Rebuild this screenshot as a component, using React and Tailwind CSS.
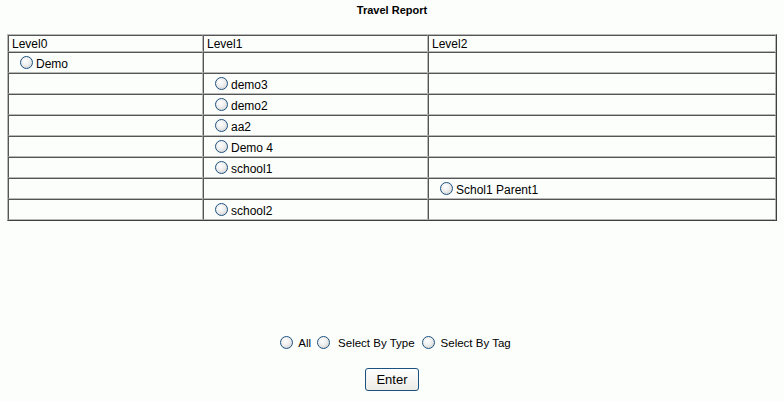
import React from "react";

function Radio() {
  return (
    <span className="inline-block w-[13px] h-[13px] rounded-full border border-[#1c5180] bg-[radial-gradient(circle_at_40%_35%,#ffffff_0%,#eeeeee_45%,#c8c8c8_100%)] align-middle shrink-0" />
  );
}

const rows = [
  ["Demo", "", ""],
  ["", "demo3", ""],
  ["", "demo2", ""],
  ["", "aa2", ""],
  ["", "Demo 4", ""],
  ["", "school1", ""],
  ["", "", "Schol1 Parent1"],
  ["", "school2", ""],
];

const cell =
  "border border-t-[#555555] border-l-[#555555] border-r-[#b8b8b8] border-b-[#b8b8b8] p-0 align-middle";

function Item({ label }) {
  if (!label) return null;
  return (
    <div className="flex items-center gap-[3px] pl-[11px] h-[19px]">
      <Radio />
      <span className="pt-[3px]">{label}</span>
    </div>
  );
}

export default function App() {
  return (
    <div
      className="w-[784px] h-[401px] bg-[#fcfefc] text-black text-[12px] flex flex-col items-center"
      style={{ fontFamily: '"Liberation Sans", Arial, sans-serif' }}
    >
      <div className="mt-[3px] font-bold text-[11px] leading-[14px]">Travel Report</div>

      <div className="w-full px-[7px] mt-[17px]">
        <table className="w-full border-separate border-spacing-0 border border-t-[#b8b8b8] border-l-[#b8b8b8] border-r-[#404040] border-b-[#404040] text-left leading-[14px]">
          <colgroup>
            <col className="w-[195px]" />
            <col className="w-[225px]" />
            <col />
          </colgroup>
          <thead>
            <tr className="h-[17px]">
              <td className={cell + " pl-[3px]"}>Level0</td>
              <td className={cell + " pl-[3px]"}>Level1</td>
              <td className={cell + " pl-[3px]"}>Level2</td>
            </tr>
          </thead>
          <tbody>
            {rows.map((r, i) => (
              <tr key={i} className="h-[21px]">
                {r.map((c, j) => (
                  <td key={j} className={cell}>
                    <Item label={c} />
                  </td>
                ))}
              </tr>
            ))}
          </tbody>
        </table>
      </div>

      <div className="mt-[112px] pl-[7px] flex items-center text-[11.5px]">
        <Radio />
        <span className="ml-[5px] mr-[6px] pt-[2px]">All</span>
        <Radio />
        <span className="ml-[8px] mr-[7px] pt-[2px]">Select By Type</span>
        <Radio />
        <span className="ml-[6px] pt-[2px]">Select By Tag</span>
      </div>

      <button className="mt-[16px] w-[54px] h-[23px] rounded-[3px] border border-[#1c5180] bg-[linear-gradient(#ffffff,#ecebe6)] text-[13px] leading-[18px] text-black">
        Enter
      </button>
    </div>
  );
}
